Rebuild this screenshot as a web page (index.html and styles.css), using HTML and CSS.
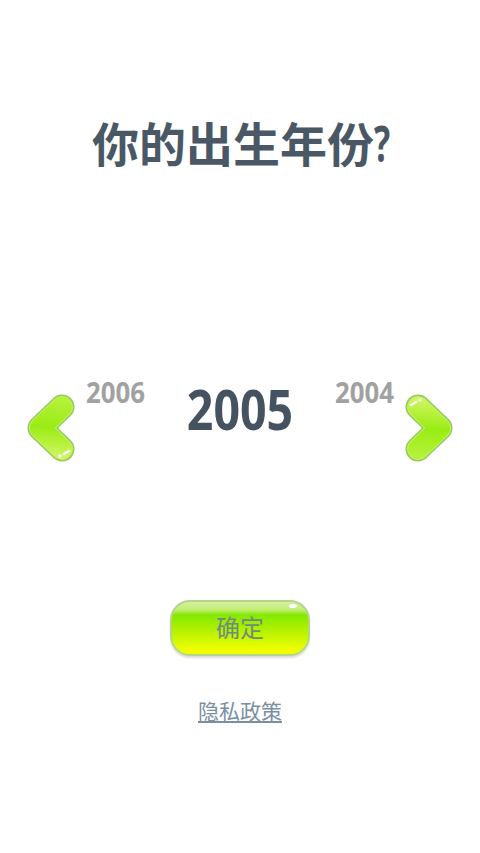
FILE: index.html
```html
<!DOCTYPE html>
<html>
	<head>
		<meta charset="UTF-8">
		<title>你的出生年份</title>
		<link rel="stylesheet" href="styles.css">
	</head>
	<body>
		<h1 class="title">你的出生年份<span class="qmark">?</span></h1>

		<div class="picker">
			<svg class="arrow" viewBox="0 0 48 68">
				<defs>
					<linearGradient id="lime" gradientUnits="userSpaceOnUse" x1="36" y1="2" x2="30" y2="66">
						<stop offset="0" stop-color="#b8f23e"/>
						<stop offset="0.5" stop-color="#9aec14"/>
						<stop offset="1" stop-color="#d6f768"/>
					</linearGradient>
				</defs>
				<path class="arrow-edge" d="M35 13 L13 34 L35 55"/>
				<path class="arrow-rim" d="M35 13 L13 34 L35 55"/>
				<path class="arrow-fill" d="M35 13 L13 34 L35 55"/>
				<path class="arrow-shine" d="M37 60 L42 57"/>
				<circle class="arrow-dot" cx="33" cy="62" r="1.8"/>
			</svg>
			<div class="year-side">2006</div>
			<div class="year-now">2005</div>
			<div class="year-side">2004</div>
			<svg class="arrow flip" viewBox="0 0 48 68">
				<path class="arrow-edge" d="M35 13 L13 34 L35 55"/>
				<path class="arrow-rim" d="M35 13 L13 34 L35 55"/>
				<path class="arrow-fill" d="M35 13 L13 34 L35 55"/>
				<path class="arrow-shine" d="M37 60 L42 57"/>
				<circle class="arrow-dot" cx="33" cy="62" r="1.8"/>
			</svg>
		</div>

		<div class="actions">
			<button class="ok">确定<span class="glint"></span></button>
			<a class="privacy" href="#">隐私政策</a>
		</div>
	</body>
</html>
```

FILE: styles.css
```css
html, body {
	margin: 0;
	height: 853px;
	overflow: hidden;
}
body {
	background: #fff;
	color: #4a5866;
	font-family: "Noto Sans CJK SC", "Noto Sans", sans-serif;
}
.title {
	margin: 110px 0 0;
	height: 64px;
	line-height: 64px;
	font-size: 47px;
	font-weight: 700;
	text-align: center;
}
.qmark {
	display: inline-block;
	width: 14px;
	font-family: "Open Sans", sans-serif;
	font-size: 50px;
	line-height: 50px;
	transform: scaleX(0.68);
	transform-origin: left;
}
.picker {
	display: grid;
	grid-template-columns: 48px 59px 1fr 59px 48px;
	column-gap: 11px;
	align-items: start;
	margin-top: 200px;
	padding: 0 27px;
	height: 90px;
}
.arrow {
	width: 48px;
	height: 68px;
	margin-top: 20px;
}
.flip {
	transform: rotate(180deg);
}
.arrow path {
	fill: none;
	stroke-linecap: round;
	stroke-linejoin: round;
}
.arrow .arrow-edge {
	stroke: #98c95c;
	stroke-width: 25;
}
.arrow .arrow-rim {
	stroke: #bdf25e;
	stroke-width: 22;
}
.arrow .arrow-fill {
	stroke: url(#lime);
	stroke-width: 20;
}
.arrow .arrow-shine {
	stroke: #fff;
	stroke-width: 2.5;
}
.arrow-dot {
	fill: #fff;
}
.year-side {
	display: flex;
	justify-content: center;
	margin-top: 1px;
	font-family: "Open Sans", sans-serif;
	font-size: 29px;
	line-height: 34px;
	font-weight: 700;
	color: #a1a1a1;
	transform: scaleX(0.89);
}
.year-now {
	margin-top: 3px;
	font-family: "Open Sans", sans-serif;
	font-size: 56px;
	line-height: 62px;
	font-weight: 700;
	text-align: center;
	transform: scaleX(0.83);
	color: #45525f;
}
.actions {
	display: flex;
	flex-direction: column;
	align-items: center;
	margin-top: 136px;
}
.ok {
	position: relative;
	width: 140px;
	height: 56px;
	padding: 0 0 3px;
	border: 2px solid #b5d68a;
	border-radius: 20px;
	background:
		linear-gradient(#d4f0a0 0, #c0ee70 8px, #84e800 13px, #b8f200 30px, #f0ff00 48px);
	box-shadow: 0 2px 2px #ddd;
	color: #6f8a80;
	font-family: "Noto Sans CJK SC", sans-serif;
	font-size: 24px;
}
.glint {
	position: absolute;
	top: 2px;
	right: 11px;
	width: 8px;
	height: 4px;
	border-radius: 50%;
	background: #fff;
}
.privacy {
	margin-top: 39px;
	font-size: 21px;
	line-height: 30px;
	color: #7a8fa2;
}
```
